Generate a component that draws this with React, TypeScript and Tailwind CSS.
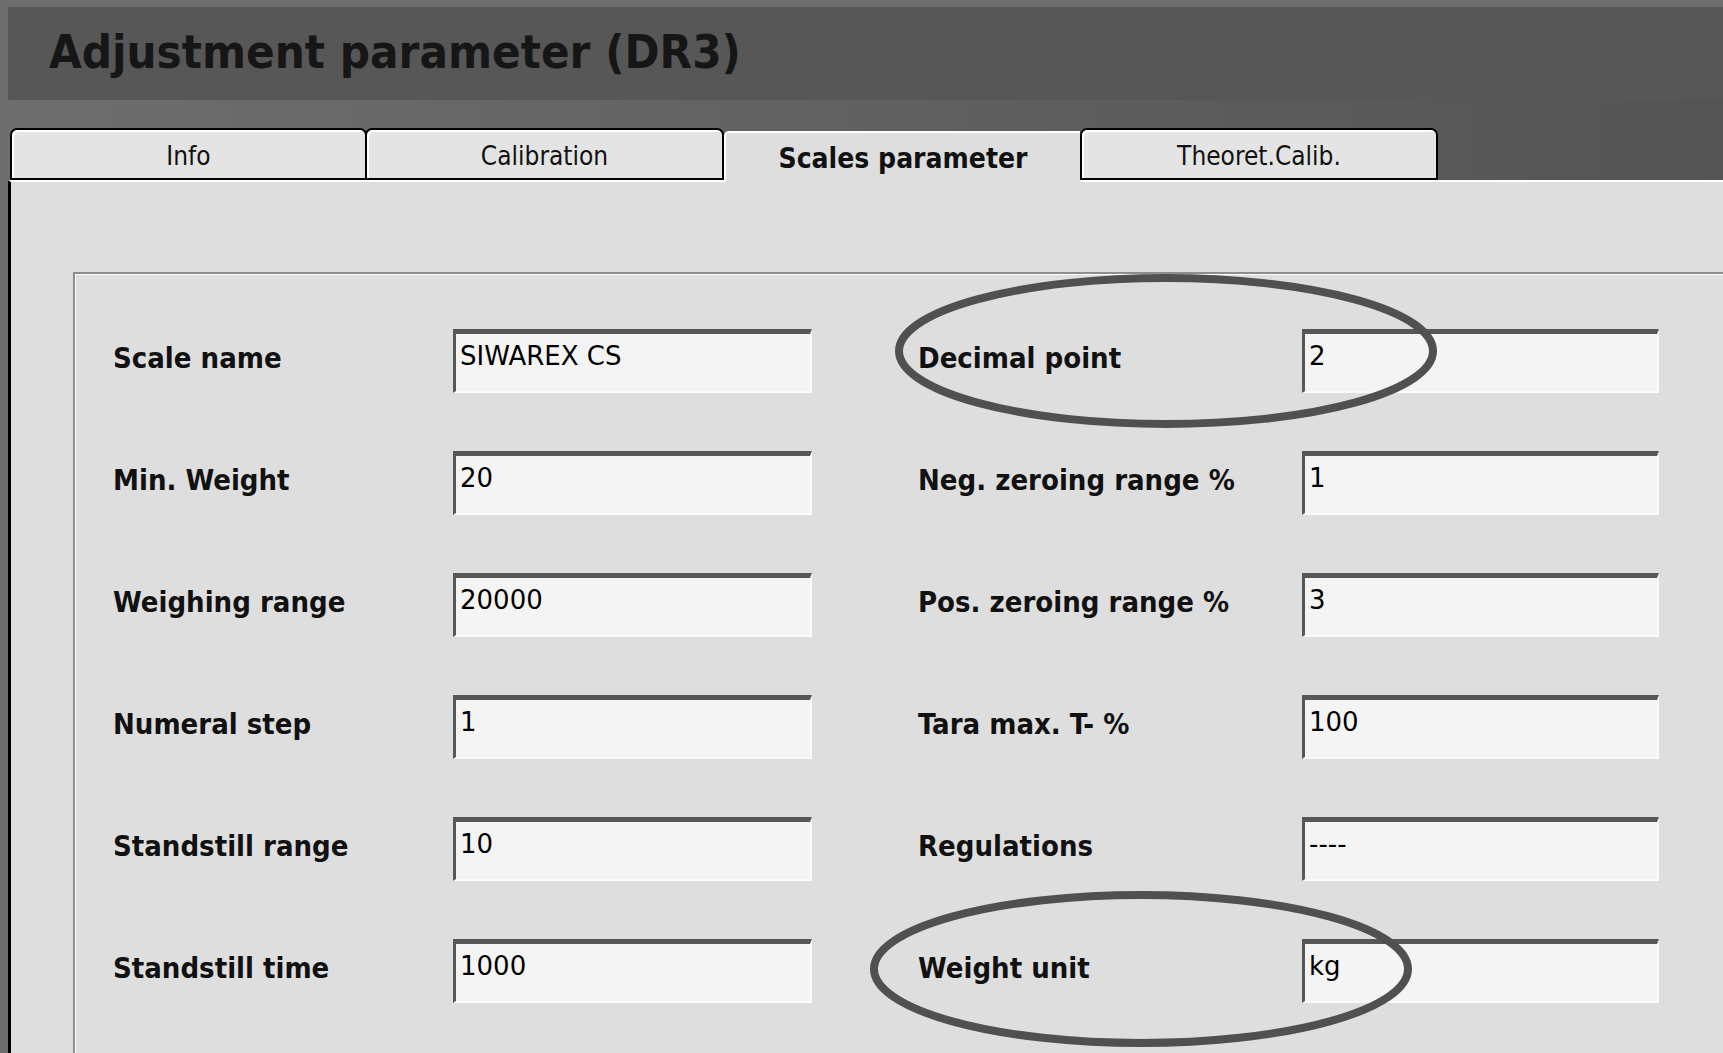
const rows: [string, string, string, string][] = [
  ["Scale name", "SIWAREX CS", "Decimal point", "2"],
  ["Min. Weight", "20", "Neg. zeroing range %", "1"],
  ["Weighing range", "20000", "Pos. zeroing range %", "3"],
  ["Numeral step", "1", "Tara max. T- %", "100"],
  ["Standstill range", "10", "Regulations", "----"],
  ["Standstill time", "1000", "Weight unit", "kg"],
];

const condensed =
  "font-['DejaVu_Sans_Condensed','DejaVu_Sans',sans-serif] font-stretch-condensed";

function Field({ value, width }: { value: string; width: string }) {
  return (
    <div
      className={`${width} h-[64px] bg-[#f4f4f4] border-t-[5px] border-t-[#575757] border-l-[3px] border-l-[#575757] border-r-2 border-r-[#fbfbfb] border-b-2 border-b-[#fbfbfb] pl-[4px] pt-[7px] text-[26px] leading-[30px] font-['DejaVu_Sans',sans-serif] text-black`}
    >
      {value}
    </div>
  );
}

function Label({ text, width }: { text: string; width: string }) {
  return (
    <div className={`${width} ${condensed} font-bold text-[29px] leading-none text-[#111] -mt-[6px]`}>
      {text}
    </div>
  );
}

function Tab({ label, first }: { label: string; first?: boolean }) {
  return (
    <div
      className={`${first ? "w-[357px]" : "w-[359px] -ml-[2px]"} h-[52px] border-2 border-black rounded-t-[7px] bg-[#e4e4e4] shadow-[inset_2px_2px_0_#fff] flex items-center justify-center ${condensed} text-[26px] text-[#111] pt-[4px]`}
    >
      {label}
    </div>
  );
}

export default function App() {
  return (
    <div className="relative w-[1723px] h-[1053px] overflow-hidden bg-[#6e6e6e] flex flex-col pt-[7px]">
      {/* Title band */}
      <div className="ml-[8px] h-[93px] bg-[#575757] flex items-center pl-[41px] pb-[4px]">
        <span className={`${condensed} font-bold text-[47px] leading-none text-[#161616]`}>
          Adjustment parameter (DR3)
        </span>
      </div>

      {/* Tabs */}
      <div className="h-[80px] flex items-end pl-[10px] bg-linear-to-r from-[#6e6e6e] to-[#545454]">
        <Tab label="Info" first />
        <Tab label="Calibration" />
        <div
          className={`relative z-10 w-[356px] h-[51px] -mb-[2px] bg-[#dedede] border-l-2 border-t-2 border-white rounded-tl-[5px] flex items-center justify-center ${condensed} font-bold text-[28px] text-[#111] pt-[3px]`}
        >
          Scales parameter
        </div>
        <div className="w-[358px] h-[52px] border-2 border-black rounded-t-[7px] bg-[#e4e4e4] shadow-[inset_2px_2px_0_#fff] flex items-center justify-center font-['DejaVu_Sans_Condensed','DejaVu_Sans',sans-serif] font-stretch-condensed text-[26px] text-[#111] pt-[4px]">
          Theoret.Calib.
        </div>
      </div>

      {/* Page content */}
      <div className="flex-1 ml-[8px] border-l-[3px] border-l-black border-t-2 border-t-white bg-[#dedede] flex flex-col">
        <div className="flex-1 ml-[62px] mt-[90px] border-t-2 border-l-2 border-[#8d8d8d] shadow-[inset_1px_1px_0_#fff] pt-[55px] pl-[38px] flex flex-col gap-[58px]">
          {rows.map(([l1, v1, l2, v2]) => (
            <div key={l1} className="flex items-center h-[64px]">
              <Label text={l1} width="w-[340px]" />
              <Field value={v1} width="w-[359px]" />
              <div className="w-[106px]" />
              <Label text={l2} width="w-[384px]" />
              <Field value={v2} width="w-[357px]" />
            </div>
          ))}
        </div>
      </div>

      {/* Hand-drawn annotation rings */}
      <svg className="absolute left-0 top-0 pointer-events-none" width="1723" height="1053">
        <ellipse cx="1166" cy="351" rx="267" ry="73" fill="none" stroke="#505050" strokeWidth="8" />
        <ellipse cx="1141" cy="969" rx="267" ry="74" fill="none" stroke="#505050" strokeWidth="8" />
      </svg>
    </div>
  );
}
